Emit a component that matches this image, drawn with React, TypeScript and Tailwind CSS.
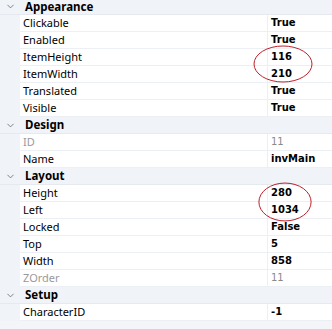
import { ChevronDown } from 'lucide-react';

type Prop = { name: string; value: string; muted?: boolean };
type Group = { title: string; props: Prop[] };

const groups: Group[] = [
  {
    title: 'Appearance',
    props: [
      { name: 'Clickable', value: 'True' },
      { name: 'Enabled', value: 'True' },
      { name: 'ItemHeight', value: '116' },
      { name: 'ItemWidth', value: '210' },
      { name: 'Translated', value: 'True' },
      { name: 'Visible', value: 'True' },
    ],
  },
  {
    title: 'Design',
    props: [
      { name: 'ID', value: '11', muted: true },
      { name: 'Name', value: 'invMain' },
    ],
  },
  {
    title: 'Layout',
    props: [
      { name: 'Height', value: '280' },
      { name: 'Left', value: '1034' },
      { name: 'Locked', value: 'False' },
      { name: 'Top', value: '5' },
      { name: 'Width', value: '858' },
      { name: 'ZOrder', value: '11', muted: true },
    ],
  },
  {
    title: 'Setup',
    props: [{ name: 'CharacterID', value: '-1' }],
  },
];

function Ring({ className }: { className: string }) {
  return (
    <svg className={`absolute pointer-events-none ${className}`} viewBox="0 0 60 38" preserveAspectRatio="none">
      <ellipse cx="30" cy="19" rx="29" ry="18" fill="none" stroke="#c0202a" strokeWidth="1" vectorEffect="non-scaling-stroke" />
    </svg>
  );
}

export default function App() {
  return (
    <div className="relative w-[332px] h-[329px] overflow-hidden bg-[#f3f5f9] text-[11px] text-black font-['Noto_Sans',sans-serif]">
      {groups.map((g, i) => (
        <div key={g.title}>
          {/* first header is scrolled up a couple of pixels */}
          <div
            className={`flex bg-[#f0f3f8] border-b border-[#e6eaf0] ${
              i === 0 ? 'h-[15px] items-start' : 'h-[17px] items-center'
            }`}
          >
            <div className={`w-[20px] flex justify-center pl-[1px] ${i === 0 ? 'pt-[1px]' : ''}`}>
              <ChevronDown size={11} strokeWidth={1.75} className="text-[#666]" />
            </div>
            <span className={`pl-[5px] font-bold text-[11.5px] ${i === 0 ? 'leading-[13px]' : 'leading-[16px]'}`}>
              {g.title}
            </span>
          </div>
          {g.props.map((p) => (
            <div key={p.name} className="flex h-[17px]">
              <div className="w-[20px] bg-[#f0f3f8]" />
              <div className="flex-1 flex bg-white border-b border-[#eceff3]">
                <div className={`w-[248px] pl-[3px] leading-[16px] border-r border-[#eceff3] ${p.muted ? 'text-[#9a9a9a]' : ''}`}>
                  {p.name}
                </div>
                <div
                  className={`flex-1 pl-[3px] leading-[16px] text-[10px] font-['DejaVu_Sans',sans-serif] ${
                    p.muted ? 'text-[#8a8a8a]' : 'font-bold'
                  }`}
                >
                  {p.value}
                </div>
              </div>
            </div>
          ))}
        </div>
      ))}
      <Ring className="left-[253px] top-[45px] w-[60px] h-[38px]" />
      <Ring className="left-[258px] top-[182px] w-[54px] h-[40px]" />
    </div>
  );
}
